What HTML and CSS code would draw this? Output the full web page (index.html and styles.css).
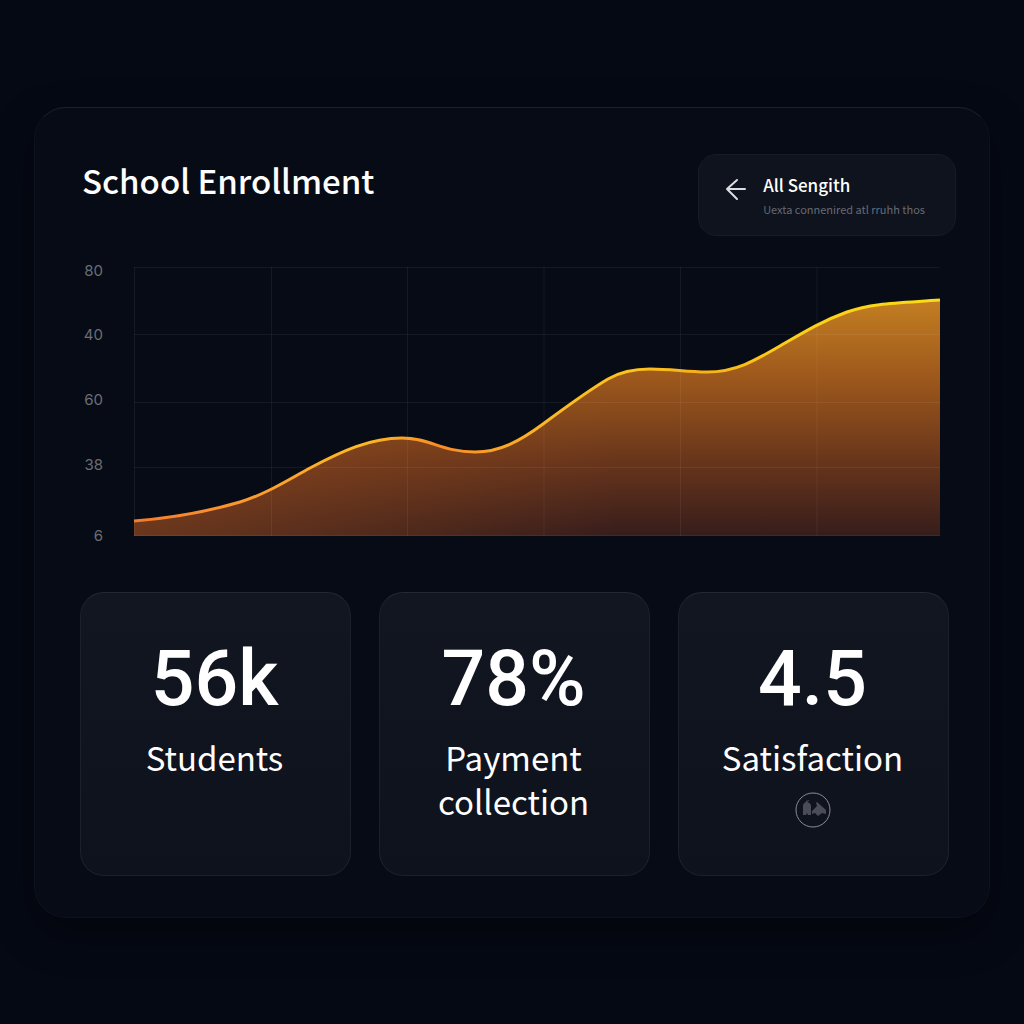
FILE: index.html
```html
<!DOCTYPE html>
<html lang="en">
<head>
  <meta charset="utf-8">
  <meta name="viewport" content="width=device-width, initial-scale=1">
  <title>School Enrollment</title>
  <link rel="stylesheet" href="styles.css">
</head>
<body>
  <main class="panel">
    <header class="panel-header">
      <h1>School Enrollment</h1>
      <button type="button" class="back-button">
        <svg class="back-icon" viewBox="0 0 22 24" aria-hidden="true">
          <path d="M20 11H2M12 2L2 11l10 10"/>
        </svg>
        <span class="back-text">
          <span class="back-title">All Sengith</span>
          <span class="back-note">Uexta connenired atl rruhh thos</span>
        </span>
      </button>
    </header>

    <section class="chart">
      <ul class="axis">
        <li>80</li>
        <li>40</li>
        <li>60</li>
        <li>38</li>
        <li>6</li>
      </ul>
      <svg class="plot" viewBox="0 0 806 269" role="img" aria-label="Enrollment over time">
        <defs>
          <linearGradient id="fill" gradientUnits="userSpaceOnUse" x1="0" y1="33" x2="0" y2="268">
            <stop offset="0" stop-color="#c47e22"/>
            <stop offset="0.35" stop-color="#9a561c"/>
            <stop offset="0.7" stop-color="#66341b"/>
            <stop offset="1" stop-color="#371d1b"/>
          </linearGradient>
          <linearGradient id="glow" x1="0" y1="0" x2="1" y2="0">
            <stop offset="0" stop-color="#a8561f" stop-opacity="0.45"/>
            <stop offset="0.6" stop-color="#a8561f" stop-opacity="0"/>
          </linearGradient>
          <linearGradient id="line" gradientUnits="userSpaceOnUse" x1="0" y1="0" x2="806" y2="0">
            <stop offset="0" stop-color="#f47b2c"/>
            <stop offset="0.12" stop-color="#fb9530"/>
            <stop offset="0.28" stop-color="#fdbb25"/>
            <stop offset="0.38" stop-color="#f98c25"/>
            <stop offset="0.43" stop-color="#fb9c27"/>
            <stop offset="0.52" stop-color="#fcb926"/>
            <stop offset="0.62" stop-color="#fcc41d"/>
            <stop offset="0.7" stop-color="#f8ae1c"/>
            <stop offset="0.8" stop-color="#fccd18"/>
            <stop offset="1" stop-color="#fbdc16"/>
          </linearGradient>
        </defs>
        <path fill="url(#fill)" d="M0 254C38 251 72 245 106 235C132 227 152 214 176 201C208 184 236 171 268 171C296 171 308 185 341 185C366 185 386 174 409 157C432 140 452 125 474 112C486 105 498 102 516 102C538 102 552 105 573 105C602 105 622 93 646 79C670 65 688 54 713 45C738 36 764 36 806 33V269H0Z"/>
        <path fill="url(#glow)" d="M0 254C38 251 72 245 106 235C132 227 152 214 176 201C208 184 236 171 268 171C296 171 308 185 341 185C366 185 386 174 409 157C432 140 452 125 474 112C486 105 498 102 516 102C538 102 552 105 573 105C602 105 622 93 646 79C670 65 688 54 713 45C738 36 764 36 806 33V269H0Z"/>
        <path class="grid-line" d="M0 .5H806M0 67.5H806M0 135.5H806M0 200.5H806M0 268.5H806M.5 0V269M137.5 0V269M273.5 0V269M410 0V269M546.5 0V269M683 0V269"/>
        <path class="curve" stroke="url(#line)" d="M0 254C38 251 72 245 106 235C132 227 152 214 176 201C208 184 236 171 268 171C296 171 308 185 341 185C366 185 386 174 409 157C432 140 452 125 474 112C486 105 498 102 516 102C538 102 552 105 573 105C602 105 622 93 646 79C670 65 688 54 713 45C738 36 764 36 806 33"/>
      </svg>
    </section>

    <section class="stats">
      <article class="card">
        <p class="value">56k</p>
        <h2>Students</h2>
      </article>
      <article class="card">
        <p class="value">78%</p>
        <h2>Payment collection</h2>
      </article>
      <article class="card">
        <p class="value">4.5</p>
        <h2>Satisfaction</h2>
        <svg class="badge" viewBox="0 0 36 36" aria-hidden="true">
          <circle cx="18" cy="18" r="17"/>
          <path d="M8 23V14q0-3 3-4v-1l3-1v1l-2 1q4 1 4 4v9h-3l-1-2-1 2zM17 19l5-5-1-3 1-1 9 8v4l-4-1-4 3-3-3-3 1z"/>
        </svg>
      </article>
    </section>
  </main>
</body>
</html>
```
FILE: styles.css
```css
* {
  box-sizing: border-box;
}

body {
  margin: 0;
  min-height: 100vh;
  padding: 32px 34px;
  display: flex;
  align-items: center;
  background: #050914;
  color: #fff;
  font-family: "Noto Sans CJK SC", "Noto Sans", sans-serif;
}

h1, h2, p, ul {
  margin: 0;
  padding: 0;
  font-weight: 500;
}

.panel {
  width: 100%;
  padding: 46px 33px 41px 46px;
  border: 1px solid #0d121d;
  border-top-color: #1c222d;
  border-radius: 32px;
  background: #070b15;
  box-shadow: 0 16px 40px rgba(0, 0, 0, 0.4);
}

.panel-header {
  display: flex;
  justify-content: space-between;
  align-items: flex-start;
}

h1 {
  padding: 4px 0 0 1px;
  font-size: 33px;
  line-height: 44px;
}

.back-button {
  display: flex;
  align-items: center;
  gap: 16px;
  padding: 17px 30px 15px 26px;
  border: 1px solid #171b26;
  border-radius: 18px;
  background: #0f131d;
  color: #fff;
  font-family: inherit;
  text-align: left;
  cursor: pointer;
}

.back-icon {
  width: 22px;
  height: 24px;
  margin-bottom: 12px;
  fill: none;
  stroke: #dcdde2;
  stroke-width: 2;
  stroke-linecap: round;
  stroke-linejoin: round;
}

.back-text {
  display: flex;
  flex-direction: column;
}

.back-title {
  font-size: 17px;
  font-weight: 500;
  line-height: 26px;
}

.back-note {
  color: #666a73;
  font-size: 11px;
  line-height: 22px;
}

.chart {
  display: flex;
  gap: 31px;
  margin: 31px 16px 0 0;
}

.axis {
  display: grid;
  grid-template-rows: 64px 65px 65px 71px 20px;
  width: 22px;
  margin-top: -6px;
  list-style: none;
  color: #6b6e76;
  font-family: Inter, sans-serif;
  font-size: 15px;
  font-weight: 400;
  line-height: 20px;
  text-align: right;
}

.plot {
  flex: 1;
  min-width: 0;
  align-self: flex-start;
}

.grid-line {
  fill: none;
  stroke: #fff;
  stroke-opacity: 0.06;
}

.curve {
  fill: none;
  stroke-width: 3;
}

.stats {
  display: grid;
  grid-template-columns: repeat(3, 1fr);
  gap: 28px;
  margin: 46px 7px 0 -1px;
}

.card {
  display: flex;
  flex-direction: column;
  align-items: center;
  min-height: 284px;
  padding: 36px 42px 46px 40px;
  border: 1px solid #1c202b;
  border-top-color: #232833;
  border-radius: 24px;
  background: linear-gradient(#121621, #0e121c);
  text-align: center;
}

.value {
  font-family: Roboto, sans-serif;
  font-size: 77px;
  line-height: 100px;
}

h2 {
  margin-top: 6px;
  font-size: 33px;
  font-weight: 400;
  line-height: 44px;
}

.badge {
  width: 36px;
  height: 36px;
  margin-top: 13px;
  fill: #4a4d57;
}

.badge circle {
  fill: none;
  stroke: #8a8d94;
}
```
